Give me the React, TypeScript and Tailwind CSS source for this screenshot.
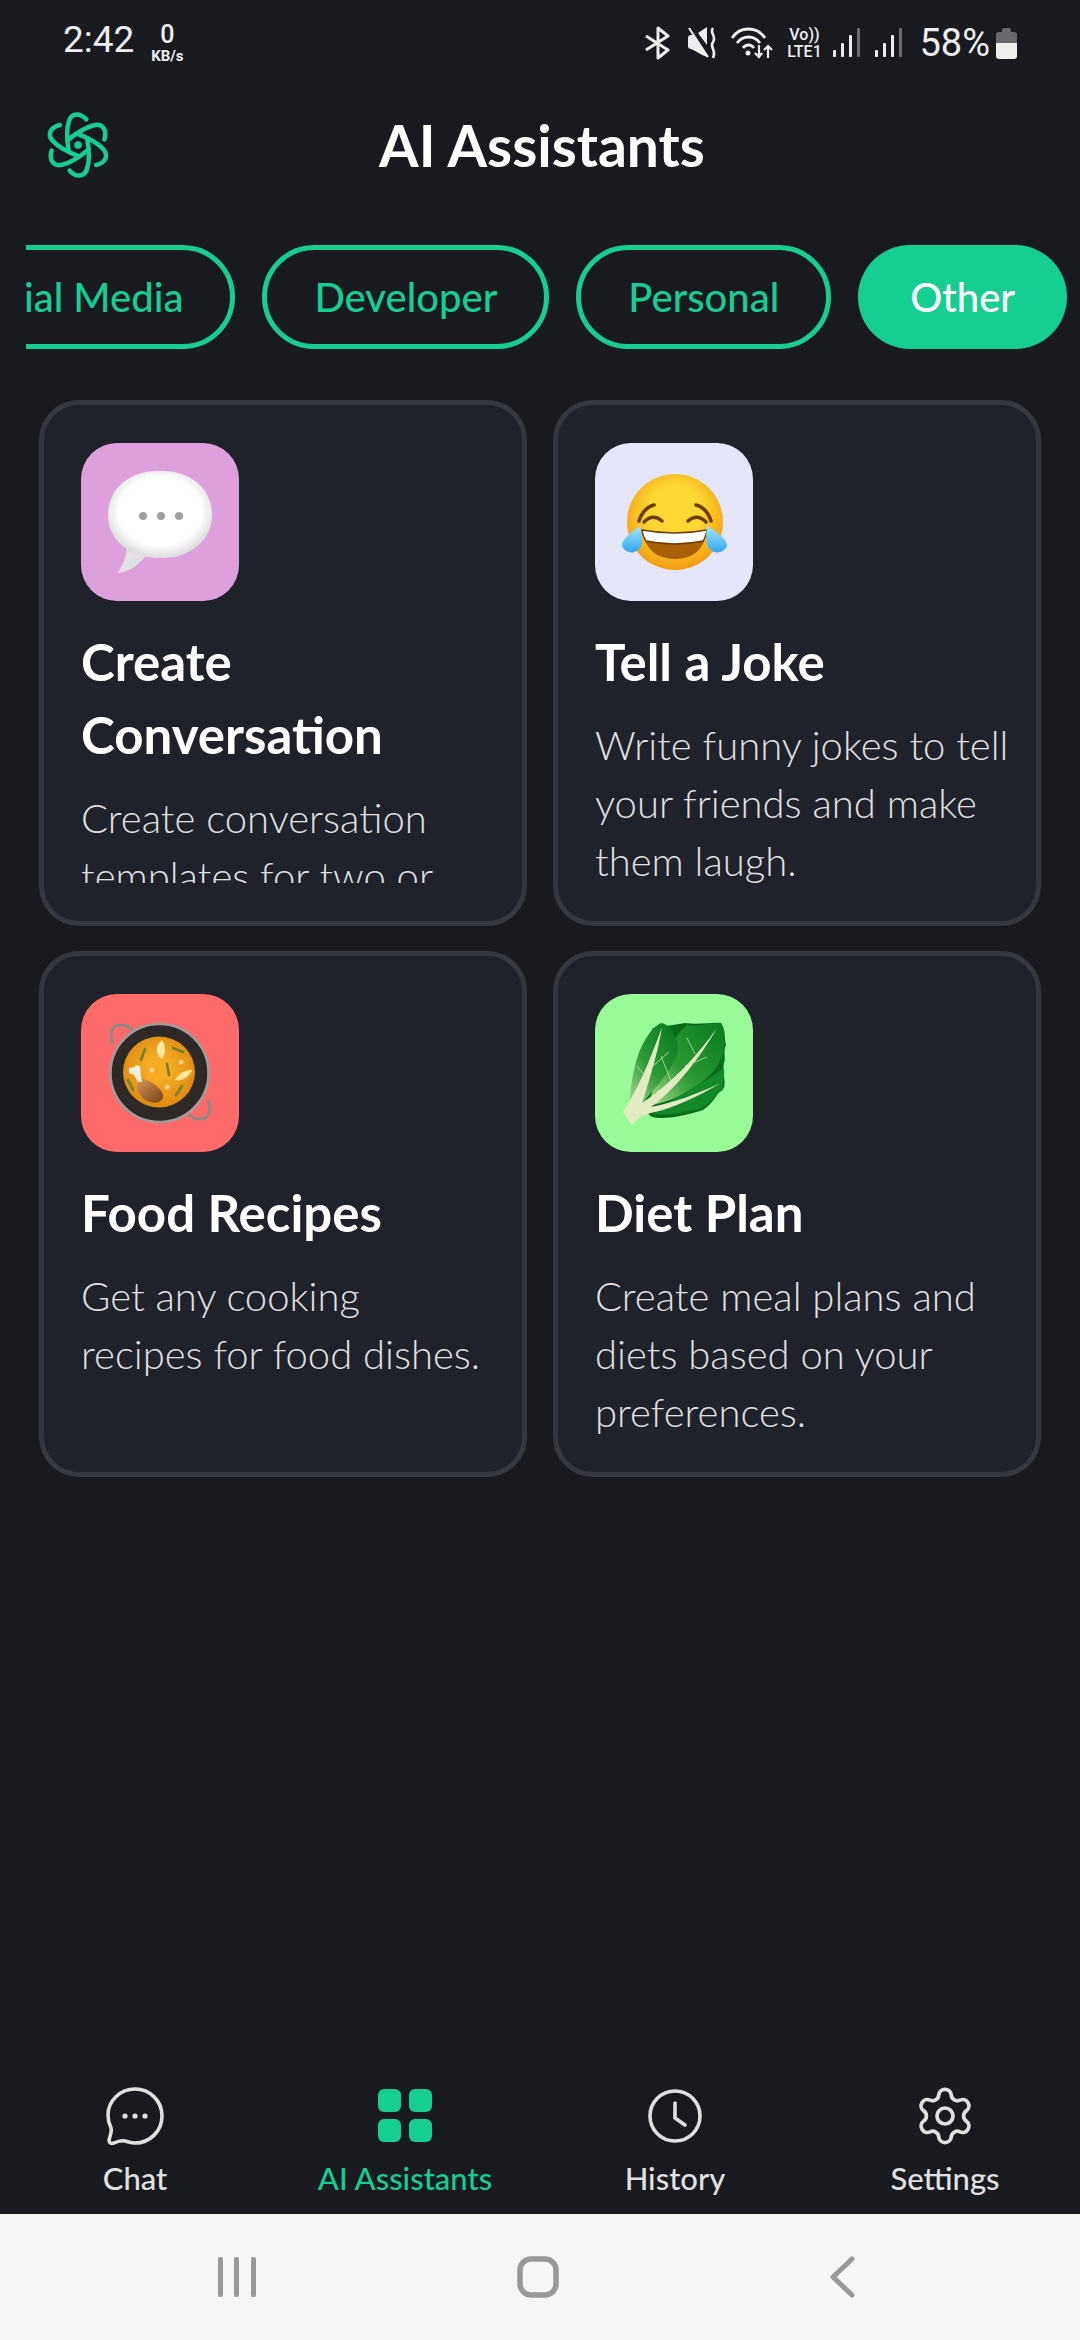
import { Settings } from 'lucide-react';
import type { ReactNode } from 'react';

const GREEN = '#17ce92';

function Logo() {
  return (
    <svg width="66" height="68" viewBox="-35 -36 70 72" fill="none" stroke={GREEN} strokeWidth="4.8" strokeLinecap="round">
      {[0, 60, 120, 180, 240, 300].map((a) => (
        <path key={a} transform={`rotate(${a})`} d="M28 -6 C31 -16 26 -23 17 -21 C8 -19 0 -14 -11 -5" />
      ))}
      <circle cx="0" cy="0" r="4" fill={GREEN} stroke="none" />
    </svg>
  );
}

function StatusIcons() {
  return (
    <div className="flex items-center">
      {/* bluetooth */}
      <svg width="28" height="34" viewBox="0 0 28 34" fill="none" stroke="#eee" strokeWidth="3">
        <path d="M2 10 L24 24 L14 32 V2 L24 10 L2 24" strokeLinejoin="round" />
      </svg>
      {/* muted */}
      <svg className="ml-[15px]" width="31" height="32" viewBox="0 0 31 32" fill="none">
        <path d="M1 11 C1 9 2 8 4 8 L6 8 L20 28 V30 C14 28 9 24 4 22 C2 22 1 21 1 19 Z" fill="#eee" />
        <path d="M11 6 L20 0 V18 Z" fill="#eee" />
        <path d="M2 1 L21 30" stroke="#eee" strokeWidth="2" />
        <path d="M26 1 C22 6 30 9 26 15 C22 20 30 23 26 31" stroke="#eee" strokeWidth="2.6" />
      </svg>
      {/* wifi */}
      <svg className="ml-[13px]" width="42" height="32" viewBox="0 0 42 32" fill="none" stroke="#eee" strokeWidth="2.8">
        <path d="M1 11 C9 -1 26 -1 34 11" />
        <path d="M6 16 C12 8 23 8 29 16" />
        <path d="M12 21 C15 17 20 17 23 21" />
        <circle cx="17" cy="26" r="2.5" fill="#eee" stroke="none" />
        <path d="M28 18 V30 M24 26 L28 30 L31 26" strokeWidth="2.2" />
        <path d="M37 31 V19 M33 23 L37 19 L41 23" strokeWidth="2.2" />
      </svg>
      <div className="ml-[12px] flex w-[38px] flex-col items-center font-['Roboto',sans-serif] text-[16px] font-medium leading-[17px] text-[#eee]">
        <span>Vo))</span>
        <span>LTE1</span>
      </div>
      {/* signal */}
      {[0, 1].map((n) => (
        <svg key={n} className={n === 0 ? 'ml-[10px]' : 'ml-[14px]'} width="28" height="30" viewBox="0 0 28 30">
          <rect x="0" y="22" width="3" height="7" rx="1" fill="#eee" />
          <rect x="8" y="15" width="3" height="14" rx="1" fill="#eee" />
          <rect x="16" y="7" width="3" height="22" rx="1" fill="#eee" />
          <rect x="24" y="0" width="3" height="29" rx="1" fill="#6b6d70" />
        </svg>
      ))}
      <span className="ml-[16px] font-['Roboto',sans-serif] text-[38px] leading-none text-[#eee]">58%</span>
      {/* battery */}
      <svg className="ml-[6px]" width="21" height="32" viewBox="0 0 21 32">
        <path d="M6 3 a2 2 0 0 1 2 -2 h5 a2 2 0 0 1 2 2 v2 h3 a3 3 0 0 1 3 3 v8 H0 V8 a3 3 0 0 1 3 -3 h3 Z" fill="#68696c" />
        <path d="M0 16 H21 V29 a3 3 0 0 1 -3 3 H3 a3 3 0 0 1 -3 -3 Z" fill="#eee" />
      </svg>
    </div>
  );
}

function BubbleEmoji() {
  return (
    <svg width="158" height="158" viewBox="0 0 158 158">
      <defs>
        <radialGradient id="bub" cx="50%" cy="46%" r="58%">
          <stop offset="68%" stopColor="#ffffff" />
          <stop offset="100%" stopColor="#d2d2d2" />
        </radialGradient>
      </defs>
      <path d="M46 100 C46 112 42 124 36 130 C46 129 56 124 64 114 Z" fill="#e2e2e2" />
      <rect x="27" y="28" width="104" height="87" rx="48" ry="42" fill="url(#bub)" />
      <circle cx="62" cy="73" r="4" fill="#a0a0a0" />
      <circle cx="80" cy="73" r="4" fill="#a0a0a0" />
      <circle cx="98" cy="73" r="4" fill="#a0a0a0" />
    </svg>
  );
}

function JoyEmoji() {
  return (
    <svg width="158" height="158" viewBox="0 0 158 158">
      <defs>
        <radialGradient id="face" cx="50%" cy="40%" r="60%">
          <stop offset="45%" stopColor="#fdd835" />
          <stop offset="100%" stopColor="#f39c12" />
        </radialGradient>
        <linearGradient id="tear" x1="0" y1="0" x2="0" y2="1">
          <stop offset="0%" stopColor="#a6e6fb" />
          <stop offset="100%" stopColor="#2fa8ee" />
        </linearGradient>
      </defs>
      <circle cx="80" cy="79" r="48" fill="url(#face)" />
      <path d="M47 87 Q80 93 112 87 Q108 116 80 116 Q52 116 47 87 Z" fill="#a85f06" />
      <path d="M47 87 Q80 93 112 87 Q111 94 108 98 Q80 104 51 98 Q48 94 47 87 Z" fill="#fff" stroke="#6e3c05" strokeWidth="1.5" />
      <path d="M44 78 Q48 65 59 62" fill="none" stroke="#6e3c05" strokeWidth="3.5" strokeLinecap="round" />
      <path d="M116 78 Q112 65 101 62" fill="none" stroke="#6e3c05" strokeWidth="3.5" strokeLinecap="round" />
      <path d="M49 79 Q58 70 67 78" fill="none" stroke="#6e3c05" strokeWidth="3.5" strokeLinecap="round" />
      <path d="M111 79 Q102 70 93 78" fill="none" stroke="#6e3c05" strokeWidth="3.5" strokeLinecap="round" />
      <path d="M45 83 C46 90 48 96 47 101 A10.5 10.5 0 0 1 27 103 C27 95 38 88 45 83 Z" fill="url(#tear)" />
      <path d="M112 83 C111 90 111 96 112 101 A10.5 10.5 0 0 0 132 103 C132 95 120 88 112 83 Z" fill="url(#tear)" />
    </svg>
  );
}

function PaellaEmoji() {
  return (
    <svg width="158" height="158" viewBox="0 0 158 158">
      <defs>
        <radialGradient id="rice" cx="50%" cy="45%" r="55%">
          <stop offset="30%" stopColor="#f5ab22" />
          <stop offset="100%" stopColor="#dd8a12" />
        </radialGradient>
        <linearGradient id="leg" x1="0" y1="0" x2="1" y2="1">
          <stop offset="0%" stopColor="#d9955a" />
          <stop offset="100%" stopColor="#7a4212" />
        </linearGradient>
      </defs>
      <path d="M32 50 C27 38 32 30 40 31 C45 31 50 34 52 37" fill="none" stroke="#8f8a88" strokeWidth="3" />
      <path d="M127 106 C132 118 126 126 118 125 C113 125 108 122 106 119" fill="none" stroke="#8f8a88" strokeWidth="3" />
      <circle cx="78.5" cy="79" r="49" fill="#2e2926" stroke="#a09d9b" strokeWidth="2.5" />
      <ellipse cx="78" cy="78" rx="36" ry="35.5" fill="url(#rice)" />
      <path d="M81 46 C74 52 74 60 81 65 C85 59 85 52 81 46 Z" fill="#fdeaa0" />
      <path d="M94 86 C102 87 108 83 111 76 C104 76 97 80 94 86 Z" fill="#fdeaa0" stroke="#f7c64a" strokeWidth="1" />
      <path d="M92 54 L102 58 M60 66 L64 55 M86 70 L88 81 M101 92 L95 101 M47 86 L52 96" stroke="#75832d" strokeWidth="2.8" strokeLinecap="round" />
      <circle cx="100" cy="68" r="2.5" fill="#f7d087" />
      <circle cx="71" cy="76" r="2.5" fill="#f7d087" />
      <circle cx="86" cy="93" r="2.5" fill="#f7d087" />
      <path d="M58 84 C70 86 84 96 82 104 C79 111 66 110 60 102 C56 97 55 90 58 84 Z" fill="url(#leg)" />
      <path d="M48 74 L54 73 L55 71 L59 72 L60 82 L61 88 L57 88 L53 81 L48 79 Z" fill="#f5ece0" />
    </svg>
  );
}

function LettuceEmoji() {
  return (
    <svg width="158" height="158" viewBox="0 0 158 158">
      <defs>
        <linearGradient id="lf" x1="0.1" y1="1" x2="0.8" y2="0.1">
          <stop offset="0%" stopColor="#a6d68f" />
          <stop offset="50%" stopColor="#2c9a36" />
          <stop offset="100%" stopColor="#117f24" />
        </linearGradient>
        <linearGradient id="rf" x1="0" y1="0.9" x2="0.9" y2="0.1">
          <stop offset="0%" stopColor="#a0d486" />
          <stop offset="45%" stopColor="#2b9a34" />
          <stop offset="100%" stopColor="#0f7f22" />
        </linearGradient>
      </defs>
      {/* back leaves */}
      <path d="M38 108 C36 92 40 66 58 34 L84 30 L90 29 C104 31 116 28 126 29 C131 36 129 44 131 51 C128 58 131 64 129 69 C127 78 131 86 129 94 C122 98 120 108 108 116 C92 121 72 126 57 123 Z" fill="#096b18" />
      {/* big right leaf */}
      <path d="M54 112 C58 88 68 68 76 54 C80 42 86 36 92 31 C102 33 116 28 126 30 C131 38 128 46 130 54 C126 66 122 78 104 90 C86 104 70 108 54 112 Z" fill="url(#rf)" />
      {/* lower leaf */}
      <path d="M58 120 C76 104 98 96 129 74 C130 84 126 92 128 96 C118 102 116 110 104 115 C90 118 74 122 58 120 Z" fill="#14892a" />
      {/* left leaf */}
      <path d="M34 112 C36 88 40 62 50 46 C56 36 62 30 67 29 C76 32 84 44 83 56 C80 72 62 92 50 106 C46 112 40 114 34 112 Z" fill="url(#lf)" />
      {/* stem and veins */}
      <path d="M28 118 L37 131 L44 124 C48 122 54 119 60 118 C78 114 102 103 126 89 C102 100 78 109 56 113 C82 94 106 62 122 34 C102 62 78 88 47 109 C54 88 63 58 67 33 C58 58 47 86 35 106 Z" fill="#e3ebc3" />
      <path d="M76 87 L66 62 M90 72 L112 63 M100 60 L92 44 M52 84 L42 72 M58 72 L74 58" stroke="#c8e6b0" strokeWidth="1" fill="none" opacity="0.75" />
    </svg>
  );
}

type Assistant = { title: string; desc: string; bg: string; icon: ReactNode };

const ASSISTANTS: Assistant[] = [
  {
    title: 'Create Conversation',
    desc: 'Create conversation\ntemplates for two or\nmore people.',
    bg: 'bg-[#dda0dd]',
    icon: <BubbleEmoji />,
  },
  {
    title: 'Tell a Joke',
    desc: 'Write funny jokes to tell\nyour friends and make\nthem laugh.',
    bg: 'bg-[#e6e6fa]',
    icon: <JoyEmoji />,
  },
  {
    title: 'Food Recipes',
    desc: 'Get any cooking\nrecipes for food dishes.',
    bg: 'bg-[#ff6b6b]',
    icon: <PaellaEmoji />,
  },
  {
    title: 'Diet Plan',
    desc: 'Create meal plans and\ndiets based on your\npreferences.',
    bg: 'bg-[#98fb98]',
    icon: <LettuceEmoji />,
  },
];

function AssistantCard({ item }: { item: Assistant }) {
  return (
    <div className="h-[526px] rounded-[40px] border-[5px] border-[#35383f] bg-[#1f222b] pt-[38px] pr-[20px] pb-[38px] pl-[37px]">
      <div className="h-full overflow-hidden">
        <div className={`h-[158px] w-[158px] rounded-[36px] ${item.bg}`}>{item.icon}</div>
        <h2 className="mt-[24px] w-[340px] text-[51px] font-bold leading-[73px] text-white">{item.title}</h2>
        <p className="mt-[18px] whitespace-pre text-[40px] font-light leading-[58px] text-[#e0e0e0]">{item.desc}</p>
      </div>
    </div>
  );
}

const TABS = ['Social Media', 'Developer', 'Personal', 'Other'];

function ChatIcon() {
  return (
    <svg width="60" height="60" viewBox="0 0 60 60" fill="none" stroke="#e0e0e0" strokeWidth="3.6">
      <path d="M30 3 C15 3 3 15 3 29 C3 34 4 38 6 42 C7 46 5 50 4 54 C4 57 6 58 9 57 C13 55 16 54 20 55 C23 56 27 57 30 57 C45 57 57 45 57 30 C57 15 45 3 30 3 Z" strokeLinejoin="round" />
      <circle cx="20" cy="30" r="2.6" fill="#e0e0e0" stroke="none" />
      <circle cx="30" cy="30" r="2.6" fill="#e0e0e0" stroke="none" />
      <circle cx="40" cy="30" r="2.6" fill="#e0e0e0" stroke="none" />
    </svg>
  );
}

function GridIcon() {
  return (
    <svg width="54" height="54" viewBox="0 0 54 54" fill={GREEN}>
      <rect x="0" y="0" width="23" height="23" rx="6" />
      <rect x="31" y="0" width="23" height="23" rx="6" />
      <rect x="0" y="30" width="23" height="23" rx="6" />
      <rect x="31" y="30" width="23" height="23" rx="6" />
    </svg>
  );
}

function ClockIcon() {
  return (
    <svg width="54" height="54" viewBox="0 0 54 54" fill="none" stroke="#e0e0e0" strokeWidth="3.6" strokeLinecap="round" strokeLinejoin="round">
      <circle cx="27" cy="27" r="25" />
      <path d="M27 14 V29 L37 36" />
    </svg>
  );
}

const NAV: { label: string; icon: ReactNode; active?: boolean }[] = [
  { label: 'Chat', icon: <ChatIcon /> },
  { label: 'AI Assistants', icon: <GridIcon />, active: true },
  { label: 'History', icon: <ClockIcon /> },
  { label: 'Settings', icon: <Settings size={64} strokeWidth={1.4} color="#e0e0e0" /> },
];

export default function App() {
  return (
    <div className="flex h-[2340px] w-[1080px] flex-col overflow-hidden bg-[#181a20] font-['Lato',sans-serif]">
      <div className="flex h-[80px] items-start justify-between pt-[24px] pr-[63px] pl-[63px]">
        <div className="flex items-start font-['Roboto',sans-serif] text-[#eee]">
          <span className="text-[37px] leading-[32px]">2:42</span>
          <div className="ml-[14px] flex w-[38px] flex-col items-center font-medium">
            <span className="text-[25px] leading-[21px]">0</span>
            <span className="mt-[4px] text-[15px] font-bold leading-[14px]">KB/s</span>
          </div>
        </div>
        <StatusIcons />
      </div>

      <header className="grid h-[130px] grid-cols-[1fr_auto_1fr] items-center">
        <div className="pl-[45px]">
          <Logo />
        </div>
        <h1 className="pl-[4px] text-[57px] font-bold leading-none text-white">AI Assistants</h1>
        <div />
      </header>

      <div className="mt-[35px] ml-[26px] flex w-[1041px] justify-end gap-[27px] overflow-hidden">
        {TABS.map((tab) =>
          tab === 'Other' ? (
            <div key={tab} className="flex h-[104px] shrink-0 items-center rounded-full bg-[#17ce92] px-[52px] text-[40px] font-medium text-white">
              {tab}
            </div>
          ) : (
            <div key={tab} className="flex h-[104px] shrink-0 items-center rounded-full border-[5px] border-[#17ce92] px-[47px] text-[40px] font-medium text-[#17ce92]">
              {tab}
            </div>
          ),
        )}
      </div>

      <div className="mt-[51px] grid grid-cols-2 gap-x-[26px] gap-y-[25px] px-[39px]">
        {ASSISTANTS.map((item) => (
          <AssistantCard key={item.title} item={item} />
        ))}
      </div>

      <nav className="mt-auto grid h-[130px] grid-cols-4">
        {NAV.map((n) => (
          <div key={n.label} className="flex flex-col items-center">
            <div className="flex h-[64px] items-center justify-center">{n.icon}</div>
            <span className={`mt-[10px] text-[31px] font-medium leading-[40px] ${n.active ? 'text-[#17ce92]' : 'text-[#e0e0e0]'}`}>{n.label}</span>
          </div>
        ))}
      </nav>

      <div className="flex h-[126px] items-center bg-[#f6f6f6] pl-[218px]">
        <svg width="38" height="42" viewBox="0 0 38 42" fill="#999">
          <rect x="0" y="1" width="5" height="40" rx="2" />
          <rect x="16" y="1" width="5" height="40" rx="2" />
          <rect x="33" y="1" width="5" height="40" rx="2" />
        </svg>
        <svg className="ml-[261px]" width="42" height="42" viewBox="0 0 42 42" fill="none" stroke="#999" strokeWidth="5.5">
          <rect x="3" y="3" width="36" height="36" rx="11" />
        </svg>
        <svg className="ml-[270px]" width="26" height="42" viewBox="0 0 26 42" fill="none" stroke="#999" strokeWidth="5" strokeLinecap="round" strokeLinejoin="round">
          <path d="M23 3 L4 21 L23 39" />
        </svg>
      </div>
    </div>
  );
}
